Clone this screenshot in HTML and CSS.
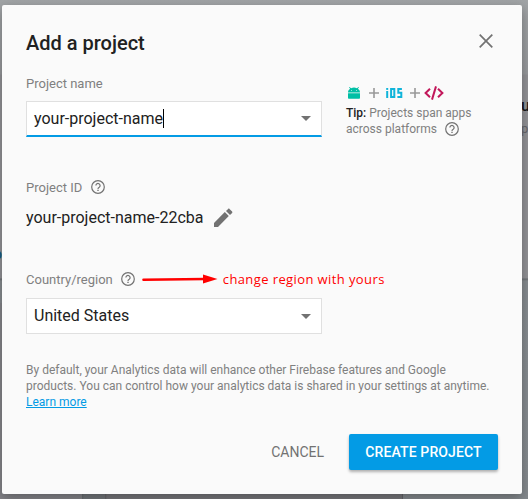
FILE: index.html
```html
<!DOCTYPE html>
<html lang="en">
<head>
<meta charset="utf-8">
<title>Add a project</title>
<link rel="stylesheet" href="styles.css">
</head>
<body>
<svg width="0" height="0" class="defs">
  <symbol id="help" viewBox="0 0 14 14"><circle cx="7" cy="7" r="6.3" fill="none" stroke="currentColor" stroke-width="1.2"/><path d="M4.9 5.6a2.1 2.1 0 1 1 3.3 1.7C7.4 7.8 7 8.1 7 8.9" fill="none" stroke="currentColor" stroke-width="1.2"/><path d="M6.3 9.8h1.4v1.3H6.3z" fill="currentColor"/></symbol>
</svg>
<div class="backdrop">
  <span class="bg-word">u</span>
  <span class="bg-word bg-small">p</span>
  <span class="bg-link">o</span>
  <span class="bg-card"></span>
  <span class="bg-foot"></span>
</div>
<main class="dialog">
  <header class="head">
    <h1>Add a project</h1>
    <svg class="close" width="14" height="14" viewBox="0 0 14 14"><path d="M.7.7l12.6 12.6M13.3.7L.7 13.3" stroke="#727272" stroke-width="1.7"/></svg>
  </header>
  <section class="name-row">
    <div class="field">
      <label class="label">Project name</label>
      <div class="select focused"><span class="value">your-project-name</span><i class="caret"></i><i class="arrow"></i></div>
    </div>
    <aside class="tip">
      <div class="platforms">
        <svg width="12" height="12" viewBox="0 0 12 12"><path fill="#00bfa5" d="M0 5.6C0 3.7.8 2.5 2.2 1.7L1 .5l.5-.5L3.1 1.3a6.5 6.5 0 0 1 5.8 0L10.5 0l.5.5-1.2 1.2C11.2 2.5 12 3.7 12 5.6zM0 6.3h12v4.4c0 .7-.4 1.1-1.1 1.1H1.1C.4 11.8 0 11.4 0 10.7z"/><path d="M3.1 3.2h.8V4h-.8zM8.1 3.2h.8V4h-.8z" fill="#fafafa"/></svg>
        <svg width="10" height="10" viewBox="0 0 10 10"><path d="M5 0v10M0 5h10" stroke="#999" stroke-width="1.6"/></svg>
        <svg width="17" height="12" viewBox="0 0 17 12"><path d="M1.2 4v7M5.1 2h3.2v8H5.1zM15.9 2h-3.6v3.8h3V10h-3.9" fill="none" stroke="#10b4da" stroke-width="2"/><path d="M.2 1h2v1.9h-2z" fill="#10b4da"/></svg>
        <svg width="10" height="10" viewBox="0 0 10 10"><path d="M5 0v10M0 5h10" stroke="#999" stroke-width="1.6"/></svg>
        <svg width="20" height="14" viewBox="0 0 20 14"><path d="M6 2.8L1.6 7 6 11.2M14 2.8L18.4 7 14 11.2M12 .4L8 13.6" fill="none" stroke="#c2185b" stroke-width="2"/></svg>
      </div>
      <p><b>Tip:</b> Projects span apps<br>across platforms<svg class="help" width="14" height="14"><use href="#help"/></svg></p>
    </aside>
  </section>
  <section class="id-block">
    <div class="label">Project ID<svg class="help" width="14" height="14"><use href="#help"/></svg></div>
    <div class="id-line"><span>your-project-name-22cba</span><svg width="19" height="19" viewBox="0 0 19 19"><path fill="#727272" d="M0 15v4h4L14.8 8.1l-4-4zM18.1 4.9c.4-.4.4-1 0-1.4L15.5.9c-.4-.4-1-.4-1.4 0L12 2.9l4 4z"/></svg></div>
  </section>
  <section class="region">
    <div class="label">Country/region<svg class="help" width="14" height="14"><use href="#help"/></svg>
      <svg class="pointer" width="76" height="12" viewBox="0 0 76 12"><path d="M1.5 6.7L63 6" stroke="red" stroke-width="2.6" stroke-linecap="round"/><path d="M61 1.5L75.5 6 61 10.5z" fill="red"/></svg>
      <span class="note">change region with yours</span></div>
    <div class="select"><span class="value">United States</span><i class="arrow"></i></div>
  </section>
  <p class="terms">By default, your Analytics data will enhance other Firebase features and Google<br>products. You can control how your analytics data is shared in your settings at anytime.<br><a>Learn more</a></p>
  <footer class="actions"><button class="cancel">CANCEL</button><button class="create">CREATE PROJECT</button></footer>
</main>
</body>
</html>
```
FILE: styles.css
```css
* { box-sizing: border-box; }
body { margin: 0; width: 528px; height: 499px; overflow: hidden; padding: 5px 6px 5px 2px; position: relative; font-family: Roboto, sans-serif; color: #212121; background: #96989b; }
.defs { position: absolute; }
.backdrop { position: absolute; inset: 0; overflow: hidden; background: linear-gradient(#a1a4a6 0, #97999c 74px, #929296 75px, #929296 278px, #6c7074 279px, #878c90 281px, #858a8e 100%); }
.bg-word { position: absolute; left: 521px; top: 96px; font-size: 16px; font-weight: 500; color: #17171a; }
.bg-small { top: 121px; font-size: 13px; font-weight: 400; color: #66666b; }
.bg-link { position: absolute; left: -6px; top: 246px; font-size: 14px; font-weight: 500; color: #155983; }
.bg-card { position: absolute; left: 0; top: 303px; width: 2px; height: 196px; background: #85858a; }
.bg-foot { position: absolute; left: 0; top: 494px; width: 403px; height: 5px; background: linear-gradient(90deg, #85858a 82px, #656a6d 82px, #73777b 84px, #73777b 105px, #646468 105px, #77777b 107px, #77777b 402px, #646468 402px); }
.dialog { position: relative; width: 520px; height: 489px; padding: 24px 24px 0; background: #fafafa; border-radius: 2px; box-shadow: 0 4px 12px rgba(0, 0, 0, .3); }
.head { display: flex; justify-content: space-between; height: 42px; }
h1 { margin: 0; font-size: 20px; line-height: 28px; font-weight: 500; }
.close { margin: 5px 5px 0 0; }
.name-row { display: flex; gap: 24px; height: 104px; }
.field { width: 296px; }
.label { display: flex; align-items: center; height: 24px; font-size: 13px; color: #808080; }
label.label { margin-bottom: 6px; }
.help { margin-left: 8px; color: #727272; flex: none; }
.id-block .help { margin-left: 9px; }
.select { display: flex; align-items: center; width: 296px; height: 36px; padding: 0 10px 0 7px; border: 1px solid #e0e0e0; background: #fff; font-size: 16px; }
.focused { border-bottom: 2px solid #039be5; }
.caret { width: 1px; height: 19px; background: #000; }
.arrow { margin-left: auto; border: 5px solid transparent; border-top-color: #727272; border-bottom: 0; }
.tip { padding-top: 14px; font-size: 12px; line-height: 16px; color: #808080; white-space: nowrap; }
.platforms { display: flex; align-items: center; height: 16px; gap: 9px; padding-left: 2px; margin-bottom: 4px; }
.platforms svg:nth-child(3) { margin: 0 -2px; }
.platforms svg:last-child { margin-left: -5px; }
.tip p { margin: 0; }
.tip b { font-weight: 500; color: #212121; }
.tip .help { vertical-align: -3px; }
.id-block { height: 92px; }
.id-line { display: flex; align-items: center; gap: 11px; height: 36px; font-size: 16px; }
.region { height: 92px; }
.region .label { margin-bottom: 7px; }
.region .select .value { margin-top: -1px; }
.pointer { margin-left: 7px; }
.note { margin-left: 5px; color: red; font-family: "Open Sans", sans-serif; font-size: 13px; letter-spacing: .4px; white-space: nowrap; }
.terms { margin: 3px 0 0; font-size: 12px; line-height: 16px; color: #808080; white-space: nowrap; }
.terms a { color: #039be5; text-decoration: underline; }
.actions { display: flex; justify-content: flex-end; margin-top: 24px; gap: 9px; }
button { height: 36px; padding: 0 16px; border: 0; border-radius: 2px; font: 500 14px Roboto, sans-serif; white-space: nowrap; }
.cancel { background: none; color: #727272; font-weight: 400; }
.create { width: 149px; background: #039be5; color: #fff; letter-spacing: .12px; box-shadow: 0 2px 3px rgba(0, 0, 0, .3); }
```
